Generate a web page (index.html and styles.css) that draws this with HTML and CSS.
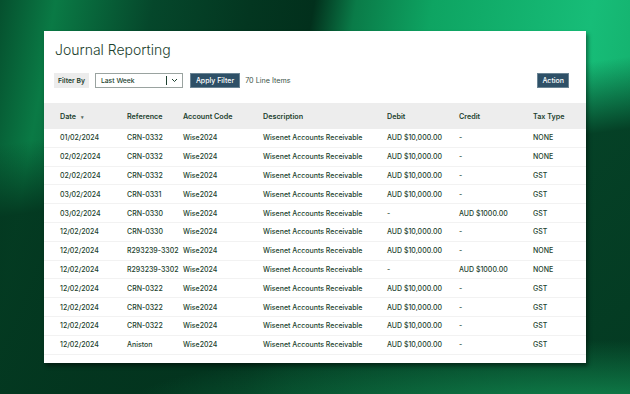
FILE: index.html
```html
<!DOCTYPE html>
<html lang="en">
<head>
    <meta charset="UTF-8">
    <meta name="viewport" content="width=device-width, initial-scale=1.0">
    <title>Journal Reporting</title>
    <link rel="stylesheet" href="styles.css">
</head>
<body>

    <div class="card">
        <h1 class="title">Journal Reporting</h1>

        <div class="toolbar">
            <span class="filter-label">Filter By</span>
            <div class="select">
                <span class="select-value">Last Week</span>
                <span class="select-arrow">
                    <svg width="7" height="5" viewBox="0 0 7 5"><path d="M1 1 L3.5 3.5 L6 1" fill="none" stroke="#1c3f2e" stroke-width="1"/></svg>
                </span>
            </div>
            <button class="btn">Apply Filter</button>
            <span class="count">70 Line Items</span>
            <button class="btn btn-action">Action</button>
        </div>

        <div class="table">
            <div class="row head">
                <div>Date <span class="sort">&#9662;</span></div>
                <div>Reference</div>
                <div>Account Code</div>
                <div>Description</div>
                <div>Debit</div>
                <div>Credit</div>
                <div>Tax Type</div>
            </div>
            <div class="row"><div>01/02/2024</div><div>CRN-0332</div><div>Wise2024</div><div>Wisenet Accounts Receivable</div><div>AUD $10,000.00</div><div>-</div><div>NONE</div></div>
            <div class="row"><div>02/02/2024</div><div>CRN-0332</div><div>Wise2024</div><div>Wisenet Accounts Receivable</div><div>AUD $10,000.00</div><div>-</div><div>NONE</div></div>
            <div class="row"><div>02/02/2024</div><div>CRN-0332</div><div>Wise2024</div><div>Wisenet Accounts Receivable</div><div>AUD $10,000.00</div><div>-</div><div>GST</div></div>
            <div class="row"><div>03/02/2024</div><div>CRN-0331</div><div>Wise2024</div><div>Wisenet Accounts Receivable</div><div>AUD $10,000.00</div><div>-</div><div>GST</div></div>
            <div class="row"><div>03/02/2024</div><div>CRN-0330</div><div>Wise2024</div><div>Wisenet Accounts Receivable</div><div>-</div><div>AUD $1000.00</div><div>GST</div></div>
            <div class="row"><div>12/02/2024</div><div>CRN-0330</div><div>Wise2024</div><div>Wisenet Accounts Receivable</div><div>AUD $10,000.00</div><div>-</div><div>GST</div></div>
            <div class="row"><div>12/02/2024</div><div>R293239-3302</div><div>Wise2024</div><div>Wisenet Accounts Receivable</div><div>AUD $10,000.00</div><div>-</div><div>NONE</div></div>
            <div class="row"><div>12/02/2024</div><div>R293239-3302</div><div>Wise2024</div><div>Wisenet Accounts Receivable</div><div>-</div><div>AUD $1000.00</div><div>NONE</div></div>
            <div class="row"><div>12/02/2024</div><div>CRN-0322</div><div>Wise2024</div><div>Wisenet Accounts Receivable</div><div>AUD $10,000.00</div><div>-</div><div>GST</div></div>
            <div class="row"><div>12/02/2024</div><div>CRN-0322</div><div>Wise2024</div><div>Wisenet Accounts Receivable</div><div>AUD $10,000.00</div><div>-</div><div>GST</div></div>
            <div class="row"><div>12/02/2024</div><div>CRN-0322</div><div>Wise2024</div><div>Wisenet Accounts Receivable</div><div>AUD $10,000.00</div><div>-</div><div>GST</div></div>
            <div class="row"><div>12/02/2024</div><div>Aniston</div><div>Wise2024</div><div>Wisenet Accounts Receivable</div><div>AUD $10,000.00</div><div>-</div><div>GST</div></div>
        </div>
    </div>

</body>
</html>
```

FILE: styles.css
```css
* {
    margin: 0;
    padding: 0;
    box-sizing: border-box;
}

body {
    font-family: 'Inter', 'Lato', sans-serif;
    color: #1c3f2e;
    height: 394px;
    overflow: hidden;
    padding: 31px 44px 0;
    background:
        radial-gradient(ellipse 480px 70px at 600px 410px, rgba(18, 140, 82, 0.95) 0%, rgba(18, 140, 82, 0) 100%),
        linear-gradient(172deg, rgba(3, 50, 29, 0) 0%, rgba(3, 50, 29, 0) 30%, rgba(3, 52, 30, 0.9) 45%, rgba(3, 52, 30, 0.95) 100%),
        linear-gradient(100deg, #05502e 0%, #0a7a45 8%, #05472b 22%, #033620 36%, #02301c 45%, #0a7b48 51%, #0ea462 62%, #17bd78 85%, #12a866 100%);
}

.card {
    width: 542px;
    height: 332px;
    background: #ffffff;
    box-shadow: 2px 3px 4px rgba(0, 0, 0, 0.45);
    padding: 10px 0 0;
}

.title {
    font-size: 14px;
    font-weight: 300;
    line-height: 18px;
    padding-left: 11px;
}

.toolbar {
    display: flex;
    align-items: center;
    height: 15px;
    margin-top: 14px;
    padding: 0 17px 0 10px;
    font-size: 6.8px;
    font-weight: 500;
}

.filter-label {
    background: #ececec;
    height: 15px;
    line-height: 15px;
    padding: 0 4px;
    font-weight: 600;
}

.select {
    display: flex;
    align-items: center;
    width: 88px;
    height: 15px;
    margin-left: 6px;
    border: 1px solid #9aa3a0;
    padding-left: 5px;
}

.select-value {
    flex: 1;
}

.select-arrow {
    display: flex;
    align-items: center;
    height: 9px;
    border-left: 1px solid #1c3f2e;
    padding: 0 4px 0 4px;
}

.btn {
    font-family: inherit;
    font-size: 7px;
    font-weight: 500;
    color: #ffffff;
    background: #2e5067;
    border: 1px solid #6a8494;
    height: 15px;
    padding: 0 5px;
    margin-left: 7px;
}

.count {
    margin-left: 5px;
    color: #3b5347;
    font-size: 7.2px;
    font-weight: 400;
}

.btn-action {
    margin-left: auto;
    padding: 0 4px;
}

.table {
    margin-top: 15px;
}

.row {
    display: grid;
    grid-template-columns: 67px 56px 80px 124px 72px 74px 1fr;
    align-items: center;
    height: 18.8px;
    padding-left: 16px;
    font-size: 7px;
    font-weight: 500;
    border-bottom: 1px solid #f2f2f2;
}

.row.head {
    height: 26px;
    background: #ededed;
    font-weight: 600;
    font-size: 7.2px;
    border-bottom: none;
}

.sort {
    font-size: 5px;
    margin-left: 3px;
    color: #5a6d64;
}
```
